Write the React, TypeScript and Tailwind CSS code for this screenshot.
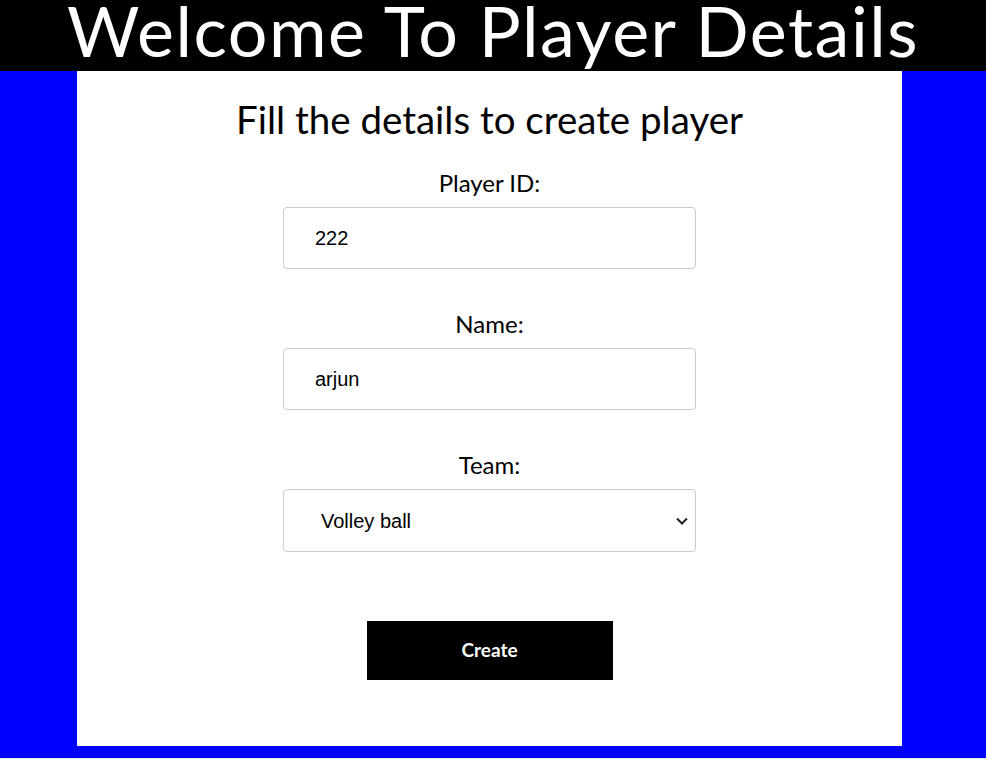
import React from "react";

export default function App() {
  const tf = { fontFamily: 'Lato, "Noto Sans", sans-serif' };
  const ar = { fontFamily: '"Liberation Sans", Arial, sans-serif' };
  return (
    <div className="w-[986px] bg-white" style={tf}>
      <div className="h-[71px] bg-black text-white text-center text-[70px] leading-[61px] tracking-[1.5px] overflow-hidden">
        Welcome To Player Details
      </div>
      <div className="bg-[#0000ff] pb-[12px] border-b border-[#e5e5e5]">
        <div className="ml-[77px] w-[825px] h-[675px] bg-white flex flex-col items-center">
          <h2 className="mt-[26px] text-[38.5px] leading-[44px] text-black">Fill the details to create player</h2>
          <label className="mt-[27px] text-[24px] leading-[30px]">Player ID:</label>
          <div className="mt-[9px] w-[413px] h-[62px] border border-[#cccccc] rounded-[4px] flex items-center pl-[31px] text-[20px]" style={ar}>222</div>
          <label className="mt-[40px] text-[24px] leading-[30px]">Name:</label>
          <div className="mt-[9px] w-[413px] h-[62px] border border-[#cccccc] rounded-[4px] flex items-center pl-[31px] text-[20px]" style={ar}>arjun</div>
          <label className="mt-[40px] text-[24px] leading-[30px]">Team:</label>
          <div className="mt-[9px] w-[413px] h-[63px] border border-[#cccccc] rounded-[4px] flex items-center pl-[37px] pr-[6px] text-[20px]" style={ar}>
            <span className="flex-1">Volley ball</span>
            <svg width="14" height="14" viewBox="0 0 14 14" fill="none" stroke="#222" strokeWidth="2"><path d="M2 4.5 L7 9.5 L12 4.5" /></svg>
          </div>
          <button className="mt-[69px] w-[246px] h-[59px] bg-black text-white font-bold text-[19px]">Create</button>
        </div>
      </div>
    </div>
  );
}
